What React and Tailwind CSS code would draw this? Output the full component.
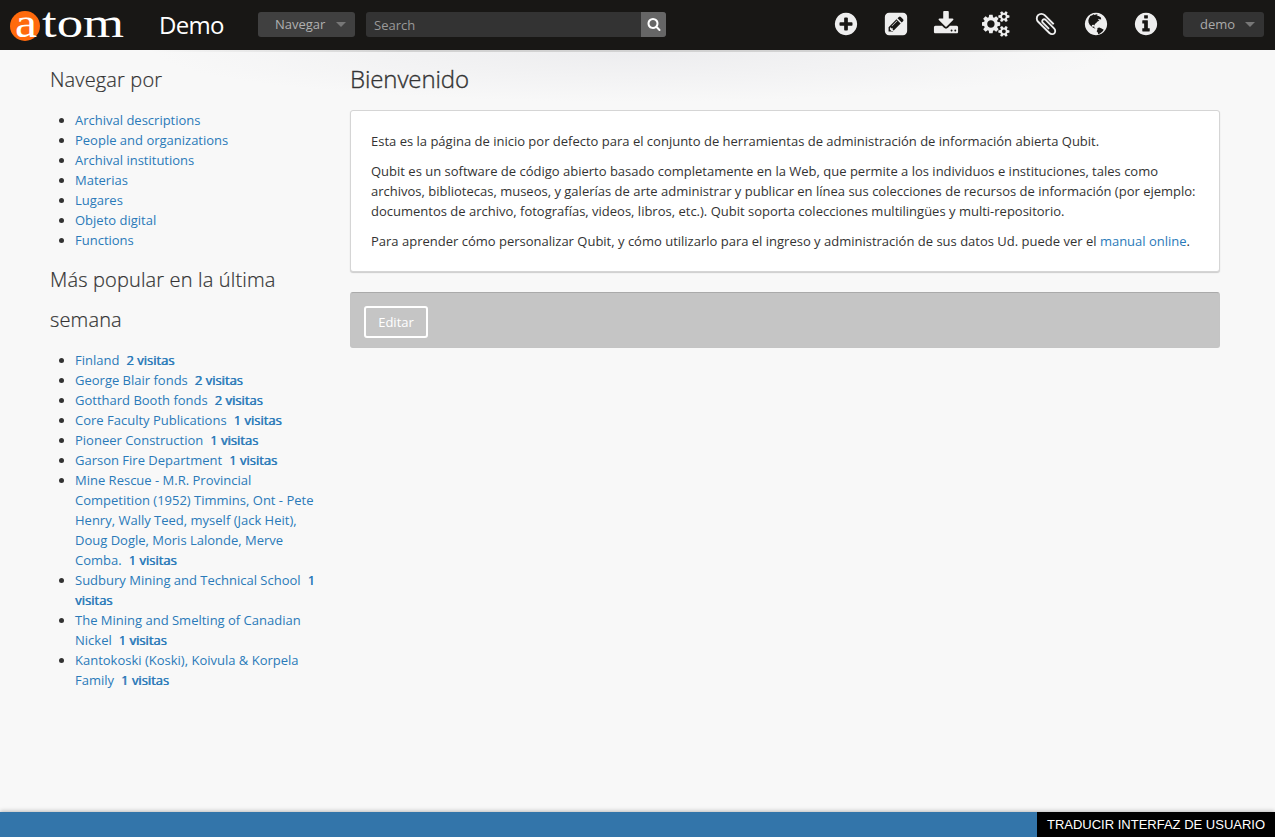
import React from "react";

const DISC = "M1664 896q0 209-103 385.5t-279.5 279.5-385.5 103-385.5-103-279.5-279.5-103-385.5 103-385.5 279.5-279.5 385.5-103 385.5 103 279.5 279.5 103 385.5z";

const ICONS = {
  plus: "M1344 960v-128q0-26-19-45t-45-19h-256v-256q0-26-19-45t-45-19h-128q-26 0-45 19t-19 45v256h-256q-26 0-45 19t-19 45v128q0 26 19 45t45 19h256v256q0 26 19 45t45 19h128q26 0 45-19t19-45v-256h256q26 0 45-19t19-45z" + DISC,
  pencil: "M416 128h960q119 0 203.500 84.500t84.500 203.500v960q0 119-84.500 203.500t-203.500 84.500h-960q-119 0-203.500-84.500t-84.500-203.500v-960q0-119 84.500-203.500t203.500-84.500zM384 1120v288h288l544-544-288-288zM1002 502l288 288 92-92q28-28 28-68t-28-68l-152-152q-28-28-68-28t-68 28zM480 1168l64-64v80h128v128h80l-64 64h-112l-96-96zM610 1010l330-330q17-17 33-1t-1 33l-330 330q-17 17-33 1t1-33z",
  download: "M1344 1344q0-26-19-45t-45-19-45 19-19 45 19 45 45 19 45-19 19-45zm256 0q0-26-19-45t-45-19-45 19-19 45 19 45 45 19 45-19 19-45zm128-224v320q0 40-28 68t-68 28h-1472q-40 0-68-28t-28-68v-320q0-40 28-68t68-28h465l135 136q58 56 136 56t136-56l136-136h464q40 0 68 28t28 68zm-325-569q17 41-14 70l-448 448q-18 19-45 19t-45-19l-448-448q-31-29-14-70 17-39 59-39h256v-448q0-26 19-45t45-19h256q26 0 45 19t19 45v448h256q42 0 59 39z",
  cogs: "M832 896q0-106-75-181t-181-75-181 75-75 181 75 181 181 75 181-75 75-181zm768 512q0-52-38-90t-90-38-90 38-38 90q0 53 37.5 90.5t90.5 37.5 90.5-37.5 37.5-90.5zm0-1024q0-52-38-90t-90-38-90 38-38 90q0 53 37.5 90.5t90.5 37.5 90.5-37.5 37.5-90.5zm-384 421v185q0 10-7 19.500t-16 10.500l-155 24q-11 35-32 76 34 48 90 115 7 11 7 20 0 12-7 19-23 30-82.500 89.500t-78.500 59.500q-11 0-21-7l-115-90q-37 19-77 31-11 108-23 155-7 24-30 24h-186q-11 0-20-7.500t-10-17.500l-23-153q-34-10-75-31l-118 89q-7 7-20 7-11 0-21-8-144-133-144-160 0-9 7-19 10-14 41-53t47-61q-23-44-35-82l-152-24q-10-1-17-9.500t-7-19.500v-185q0-10 7-19.500t16-10.500l155-24q11-35 32-76-34-48-90-115-7-11-7-20 0-12 7-20 22-30 82-89t79-59q11 0 21 7l115 90q34-18 77-32 11-108 23-154 7-24 30-24h186q11 0 20 7.500t10 17.500l23 153q34 10 75 31l118-89q8-7 20-7 11 0 21 8 144 133 144 160 0 8-7 19-12 16-42 54t-45 60q23 48 34 82l152 23q10 2 17 10.500t7 19.500zm640 533v140q0 16-149 31-12 27-30 52 51 113 51 138 0 4-4 7-122 71-124 71-8 0-46-47t-52-68q-20 2-30 2t-30-2q-14 21-52 68t-46 47q-2 0-124-71-4-3-4-7 0-25 51-138-18-25-30-52-149-15-149-31v-140q0-16 149-31 13-29 30-52-51-113-51-138 0-4 4-7 4-2 35-20t59-34 30-16q8 0 46 46.500t52 67.500q20-2 30-2t30 2q51-71 92-112l6-2q4 0 124 70 4 3 4 7 0 25-51 138 17 23 30 52 149 15 149 31zm0-1024v140q0 16-149 31-12 27-30 52 51 113 51 138 0 4-4 7-122 71-124 71-8 0-46-47t-52-68q-20 2-30 2t-30-2q-14 21-52 68t-46 47q-2 0-124-71-4-3-4-7 0-25 51-138-18-25-30-52-149-15-149-31v-140q0-16 149-31 13-29 30-52-51-113-51-138 0-4 4-7 4-2 35-20t59-34 30-16q8 0 46 46.500t52 67.500q20-2 30-2t30 2q51-71 92-112l6-2q4 0 124 70 4 3 4 7 0 25-51 138 17 23 30 52 149 15 149 31z",
  clip: "M1596 1385q0 117-79 196t-196 79q-135 0-235-100l-777-776q-113-115-113-271 0-159 110-270t269-111q158 0 273 113l605 606q10 10 10 22 0 16-30.500 46.500t-46.500 30.500q-13 0-23-10l-606-607q-79-77-181-77-106 0-179 75t-73 181q0 105 76 181l776 777q63 63 145 63 64 0 106-42t42-106q0-82-63-145l-581-581q-26-24-60-24-29 0-48 19t-19 48q0 32 25 59l410 410q10 10 10 22 0 16-31 47t-47 31q-12 0-22-10l-410-410q-63-61-63-149 0-82 57-139t139-57q88 0 149 63l581 581q100 98 100 235z",
  globe: DISC + "M500 340l140-50 90-70 80 50 110-40 120 40-110 60 140 10 150 90 40 130-100 20-70-50-50 80 90 70-130 40-90 100-90 80-30 100-70-60-110 30 20 110 80 10 60-40 0 90 90 50-40 20-150-70-110-110-90-60-80-160-20-150 30-130zM1000 1180l120-50 130 60 180 100-90 130-170 130-120 60-30-120-80-90 50-100z",
  info: "M1152 1376v-160q0-14-9-23t-23-9h-96v-512q0-14-9-23t-23-9h-320q-14 0-23 9t-9 23v160q0 14 9 23t23 9h96v320h-96q-14 0-23 9t-9 23v160q0 14 9 23t23 9h448q14 0 23-9t9-23zm-128-896v-160q0-14-9-23t-23-9h-192q-14 0-23 9t-9 23v160q0 14 9 23t23 9h192q14 0 23-9t9-23z" + DISC,
  search: "M1216 832q0-185-131.5-316.5t-316.5-131.5-316.5 131.5-131.5 316.5 131.5 316.5 316.5 131.5 316.5-131.5 131.5-316.5zm512 832q0 52-38 90t-90 38q-54 0-90-38l-343-342q-179 124-399 124-143 0-273.5-55.5t-225-150-150-225-55.5-273.5 55.5-273.5 150-225 225-150 273.5-55.5 273.5 55.5 225 150 150 225 55.5 273.5q0 220-124 399l343 343q37 37 37 90z",
};

function Icon({ name, className, viewBox = "0 0 1792 1792" }) {
  return (
    <svg viewBox={viewBox} className={className} fill="currentColor" fillRule="evenodd" aria-hidden="true">
      <path d={ICONS[name]} />
    </svg>
  );
}

function Caret() {
  return <span className="h-0 w-0 border-x-[5px] border-t-[5px] border-x-transparent border-t-[#777]" />;
}

const browse = ["Archival descriptions", "People and organizations", "Archival institutions", "Materias", "Lugares", "Objeto digital", "Functions"];
const popular = [
  ["Finland", 2],
  ["George Blair fonds", 2],
  ["Gotthard Booth fonds", 2],
  ["Core Faculty Publications", 1],
  ["Pioneer Construction", 1],
  ["Garson Fire Department", 1],
  ["Mine Rescue - M.R. Provincial Competition (1952) Timmins, Ont - Pete Henry, Wally Teed, myself (Jack Heit), Doug Dogle, Moris Lalonde, Merve Comba.", 1],
  ["Sudbury Mining and Technical School", 1],
  ["The Mining and Smelting of Canadian Nickel", 1],
  ["Kantokoski (Koski), Koivula & Korpela Family", 1],
];

function Header() {
  return (
    <header className="flex h-[50px] shrink-0 items-center bg-[#181715]">
      <a className="ml-[10px] flex h-[50px] w-[149px] items-center">
        <svg width="116" height="36" viewBox="0 0 116 36" className="overflow-visible">
          <circle cx="15" cy="19" r="15" fill="#ff6a0c" />
          <text x="5" y="30" fontFamily="Liberation Serif, serif" fontSize="42" fill="#fff" textLength="22" lengthAdjust="spacingAndGlyphs">a</text>
          <text x="32" y="30" fontFamily="Liberation Serif, serif" fontSize="42" fill="#fff" textLength="82" lengthAdjust="spacingAndGlyphs">tom</text>
        </svg>
      </a>
      <h1 className="w-[99px] text-[24px] leading-[50px] tracking-[-0.7px] text-white">Demo</h1>
      <button className="flex h-[25px] w-[97px] -translate-y-px items-center justify-between rounded-[3px] bg-[#404040] pr-[9px] pl-[17px] text-[13px] text-[#b0b0b0]">
        Navegar<Caret />
      </button>
      <div className="ml-[11px] flex h-[25px] w-[300px] -translate-y-px overflow-hidden rounded-[3px] bg-[#333]">
        <span className="flex-1 pl-2 text-[13px] leading-[26px] text-[#999]">Search</span>
        <button className="flex w-[25px] items-center justify-center bg-[#666] text-white">
          <Icon name="search" className="size-[14px]" />
        </button>
      </div>
      <nav className="ml-[155px] flex items-center text-[#eee]">
        {["plus", "pencil", "download", "cogs", "clip", "globe", "info"].map((name) => (
          <a key={name} className="flex h-[50px] w-[50px] items-center justify-center pb-[2px]">
            {name === "cogs" ? (
              <Icon name="cogs" viewBox="0 0 1856 1792" className="h-[26px] w-[28px]" />
            ) : (
              <Icon name={name} className="size-[26px]" />
            )}
          </a>
        ))}
      </nav>
      <button className="ml-[12px] flex h-[25px] w-[81px] -translate-y-px items-center justify-between rounded-[3px] bg-[#333] pr-[9px] pl-[17px] text-[13px] text-[#aaa]">
        demo<Caret />
      </button>
    </header>
  );
}

export default function App() {
  return (
    <div className="flex h-[837px] w-[1275px] flex-col overflow-hidden bg-[#f8f8f8] font-['Open_Sans',sans-serif] text-[13px] leading-5 text-[#333]">
      <Header />
      <div className="h-[2px] shrink-0 bg-[linear-gradient(90deg,#f8f8f8_150px,#d2d2d2_400px,#d2d2d2_870px,#f8f8f8_1120px)]" />
      <div className="flex flex-1 bg-[radial-gradient(ellipse_480px_50px_at_635px_0px,#ededef_0%,#f8f8f8_100%)] pt-2 pl-[50px]">
        <aside className="w-[270px]">
          <h2 className="text-[20px] leading-10 font-light tracking-[0.15px] [-webkit-text-stroke:0.2px_#333]">Navegar por</h2>
          <ul className="mt-[10px] mb-[10px] ml-[25px] list-disc">
            {browse.map((item) => (
              <li key={item}><a className="text-[#2a7ab9]">{item}</a></li>
            ))}
          </ul>
          <h2 className="text-[20px] leading-10 font-light tracking-[0.15px] [-webkit-text-stroke:0.2px_#333]">Más popular en la última semana</h2>
          <ul className="mt-[10px] ml-[25px] list-disc">
            {popular.map(([item, visits]) => (
              <li key={item}>
                <a className="text-[#2a7ab9]">{item}{"\u00a0 "}<strong className="font-normal [text-shadow:0.6px_0_0_#2a7ab9]">{visits} visitas</strong></a>
              </li>
            ))}
          </ul>
        </aside>
        <main className="ml-[30px] w-[870px]">
          <h1 className="text-[24px] leading-[38px] font-light tracking-[-0.1px] [-webkit-text-stroke:0.35px_#333]">Bienvenido</h1>
          <section className="mt-3 flex h-[162px] flex-col gap-[10px] rounded-[3px] border border-[#d5d5d5] bg-white px-5 pt-5 shadow-[0_1px_1px_#ccc]">
            <p>Esta es la página de inicio por defecto para el conjunto de herramientas de administración de información abierta Qubit.</p>
            <p>Qubit es un software de código abierto basado completamente en la Web, que permite a los individuos e instituciones, tales como archivos, bibliotecas, museos, y galerías de arte administrar y publicar en línea sus colecciones de recursos de información (por ejemplo: documentos de archivo, fotografías, videos, libros, etc.). Qubit soporta colecciones multilingües y multi-repositorio.</p>
            <p>Para aprender cómo personalizar Qubit, y cómo utilizarlo para el ingreso y administración de sus datos Ud. puede ver el <a className="text-[#2a7ab9]">manual online</a>.</p>
          </section>
          <section className="mt-5 flex h-14 items-center rounded-[3px] border border-[#c4c4c4] border-t-[#aaa] bg-[#c5c5c5] pt-1 pl-[13px]">
            <button className="h-8 w-16 rounded-[3px] border-2 border-white text-[13px] text-white">Editar</button>
          </section>
        </main>
      </div>
      <footer className="flex h-[25px] shrink-0 justify-end bg-[#3375aa] shadow-[0_-1px_4px_#bbb]">
        <button className="w-[238px] bg-black font-['Liberation_Sans',sans-serif] text-[13px] leading-[25px] whitespace-nowrap text-white">TRADUCIR INTERFAZ DE USUARIO</button>
      </footer>
    </div>
  );
}
